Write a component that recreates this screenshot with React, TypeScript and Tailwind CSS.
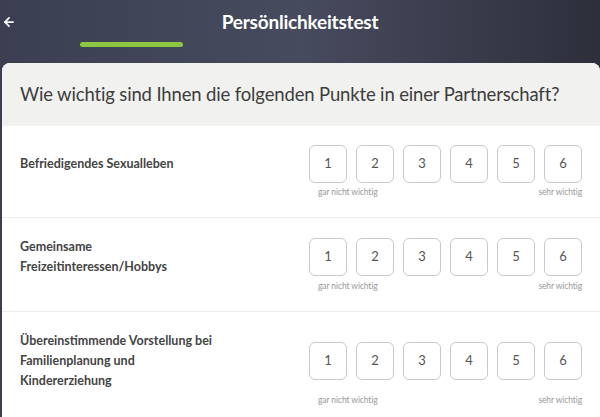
import { ArrowLeft } from "lucide-react";

const QUESTIONS = [
  "Befriedigendes Sexualleben",
  "Gemeinsame Freizeitinteressen/Hobbys",
  "Übereinstimmende Vorstellung bei Familienplanung und Kindererziehung",
];

function Scale() {
  return (
    <div className="flex gap-[9px]">
      {[1, 2, 3, 4, 5, 6].map((n) => (
        <button
          key={n}
          className="flex h-[38px] w-[38px] items-center justify-center rounded-[6px] border border-[#c9c9c9] bg-white text-[13px] text-[#555]"
        >
          {n}
        </button>
      ))}
    </div>
  );
}

function Row({ label }: { label: string }) {
  return (
    <div className="border-b border-[#ececec] py-[19px] pl-[18px] pr-[18px]">
      <div className="flex items-center justify-between">
        <p className="w-[205px] text-[12.5px] font-bold leading-[20px] text-[#444]">{label}</p>
        <Scale />
      </div>
      <div className="mt-[3px] flex justify-end">
        <div className="flex w-[271px] justify-between text-[8.5px] leading-[12px] tracking-[-0.1px] text-[#999]">
          <span className="pl-[7px]">gar nicht wichtig</span>
          <span>sehr wichtig</span>
        </div>
      </div>
    </div>
  );
}

export default function App() {
  return (
    <div
      className="h-[417px] w-[600px] overflow-hidden bg-gradient-to-r from-[#3b3f51] via-[#474b5e] to-[#2d303b]"
      style={{ fontFamily: "Lato, 'Noto Sans', sans-serif" }}
    >
      <header className="relative h-[63px]">
        <ArrowLeft className="absolute left-[2px] top-[15px] text-white" size={14} strokeWidth={3} />
        <h1 className="pt-[8px] text-center text-[19px] font-bold tracking-[-0.2px] text-white">Persönlichkeitstest</h1>
        <div className="absolute left-[80px] top-[42px] h-[5px] w-[103px] rounded-full bg-[#8dc63f]" />
      </header>
      <main className="ml-[2px] overflow-hidden rounded-t-[8px] bg-white">
        <div className="flex h-[63px] items-center bg-[#f1f1ef] px-[18px]">
          <h2 className="whitespace-nowrap text-[18.5px] tracking-[-0.15px] text-[#3d3d3d]">
            Wie wichtig sind Ihnen die folgenden Punkte in einer Partnerschaft?
          </h2>
        </div>
        {QUESTIONS.map((q) => (
          <Row key={q} label={q} />
        ))}
      </main>
    </div>
  );
}
